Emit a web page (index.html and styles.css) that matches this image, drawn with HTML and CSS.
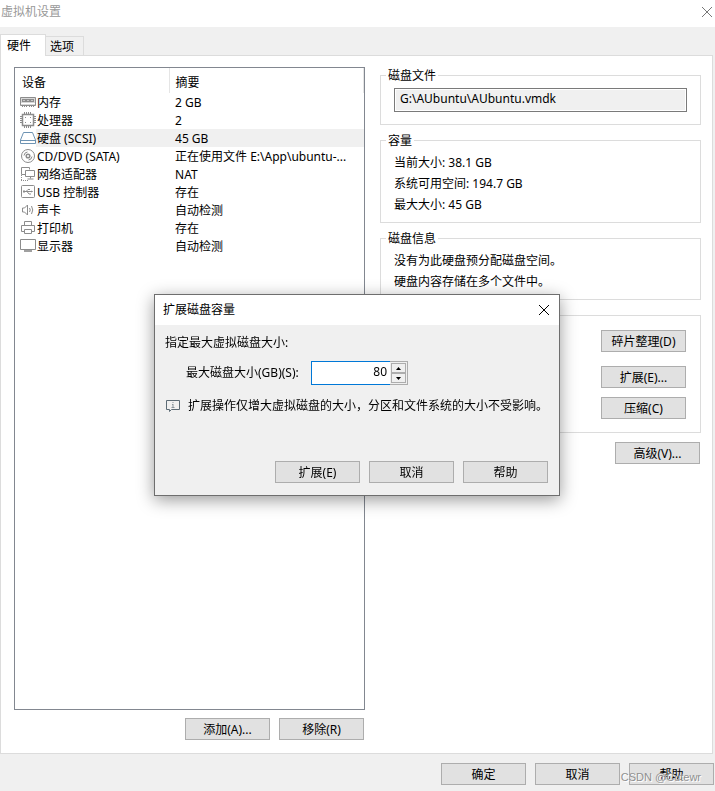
FILE: index.html
```html
<!DOCTYPE html>
<html lang="zh-CN">
<head>
<meta charset="utf-8">
<meta name="viewport" content="width=device-width, initial-scale=1">
<title>虚拟机设置</title>
<link rel="stylesheet" href="styles.css">
</head>
<body>
<header class="titlebar">
  <h1 class="title">虚拟机设置</h1>
  <button class="close" type="button" aria-label="关闭">
    <svg width="12" height="12" viewBox="0 0 12 12" fill="none" stroke="currentColor"><path d="M1 1l10 10M11 1L1 11"/></svg>
  </button>
</header>

<nav class="tabs" role="tablist">
  <button class="tab active" type="button" role="tab" aria-selected="true">硬件</button>
  <button class="tab" type="button" role="tab" aria-selected="false">选项</button>
</nav>

<main class="panel">
  <section class="left">
    <div class="list">
      <table class="devices">
        <colgroup><col class="c-icon"><col class="c-name"><col></colgroup>
        <thead>
          <tr><th colspan="2">设备</th><th>摘要</th></tr>
        </thead>
        <tbody>
          <tr>
            <td><svg class="icon" viewBox="0 0 16 16" fill="none" stroke="#8c8c8c"><path d="M.5 3.500h15v8H.5z" fill="#d8d8d8"/><path d="M2 6.500h12" stroke-width="3" stroke="#8c8c8c"/><path d="M3 6.500h2M7 6.500h2M11 6.500h2" stroke="#c8c8c8"/><path d="M1 9.500h14" stroke="#fff"/><path d="M2 12.500h5M9 12.500h5" stroke-dasharray="1 1"/></svg></td>
            <td>内存</td><td>2 GB</td>
          </tr>
          <tr>
            <td><svg class="icon" viewBox="0 0 16 16" fill="none" stroke="#8c8c8c"><path d="M2.500 2.500h11v11h-11z" stroke-width="1.500"/><path d="M4.500 0v2M6.500 0v2M8.500 0v2M10.500 0v2M4.500 14v2M6.500 14v2M8.500 14v2M10.500 14v2M0 4.500h2M0 6.500h2M0 8.500h2M0 10.500h2M14 4.500h2M14 6.500h2M14 8.500h2M14 10.500h2"/><path d="M5 5.500h1M10 10.500h1M5 10.500h1M10 5.500h1"/></svg></td>
            <td>处理器</td><td>2</td>
          </tr>
          <tr class="selected">
            <td><svg class="icon" viewBox="0 0 16 16" fill="none" stroke="#6d93b3"><path d="M3.500 2.500h9L15.500 10v3.500H.5V10z" fill="#fff"/><path d="M.5 10.500h15"/></svg></td>
            <td>硬盘 (SCSI)</td><td>45 GB</td>
          </tr>
          <tr>
            <td><svg class="icon" viewBox="0 0 16 16" fill="none" stroke="#8c8c8c"><circle cx="8" cy="8" r="6.500"/><circle cx="8" cy="8" r="1.800" stroke-width="1.500"/><path d="M4 7.500A4 4 0 0 1 7.500 4M12 8.500A4 4 0 0 1 8.500 12"/></svg></td>
            <td>CD/DVD (SATA)</td><td>正在使用文件 E:\App\ubuntu-...</td>
          </tr>
          <tr>
            <td><svg class="icon" viewBox="0 0 16 16" fill="none" stroke="#8c8c8c"><path d="M5.500 8.500h-4v-7h8v2"/><path d="M5.500 4.500h9v6h-9z"/><path d="M10.500 10.500v2M7.500 13h6"/><path d="M1.500 9v6M1 14.500h7" stroke-dasharray="1 1"/></svg></td>
            <td>网络适配器</td><td>NAT</td>
          </tr>
          <tr>
            <td><svg class="icon" viewBox="0 0 16 16" fill="none" stroke="#8c8c8c"><rect x="1.500" y="1.500" width="13" height="12" rx="1"/><path d="M3.500 7.500h9M6 7.500l2-2h2M7 7.500l2 2.500h2"/><path d="M3 6.500h2v2H3zM11 6.500l2 1-2 1z" fill="#8c8c8c" stroke="none"/></svg></td>
            <td>USB 控制器</td><td>存在</td>
          </tr>
          <tr>
            <td><svg class="icon" viewBox="0 0 16 16" fill="none" stroke="#8c8c8c"><path d="M2.500 6h2l3-3v10l-3-3h-2z"/><path d="M9.500 6q1.500 2 0 4M11.500 4q2.500 4 0 8"/></svg></td>
            <td>声卡</td><td>自动检测</td>
          </tr>
          <tr>
            <td><svg class="icon" viewBox="0 0 16 16" fill="none" stroke="#8c8c8c"><path d="M4.500 5.500v-4h7v4M4.500 11.500h-3v-6h13v6h-3"/><path d="M4.500 9.500h7v4h-7z"/></svg></td>
            <td>打印机</td><td>存在</td>
          </tr>
          <tr>
            <td><svg class="icon" viewBox="0 0 16 16" fill="none" stroke="#8c8c8c"><path d="M.5 1.500h15v10H.5z"/><path d="M4 13h8" stroke-width="2" stroke="#a0a0a0"/></svg></td>
            <td>显示器</td><td>自动检测</td>
          </tr>
        </tbody>
      </table>
    </div>
    <div class="actions">
      <button class="btn" type="button">添加(A)...</button>
      <button class="btn" type="button">移除(R)</button>
    </div>
  </section>

  <section class="right">
    <fieldset class="group">
      <legend>磁盘文件</legend>
      <input class="path" type="text" aria-label="磁盘文件" value="G:\AUbuntu\AUbuntu.vmdk" readonly>
    </fieldset>
    <fieldset class="group">
      <legend>容量</legend>
      <p class="line">当前大小: 38.1 GB</p>
      <p class="line">系统可用空间: 194.7 GB</p>
      <p class="line">最大大小: 45 GB</p>
    </fieldset>
    <fieldset class="group">
      <legend>磁盘信息</legend>
      <p class="line">没有为此硬盘预分配磁盘空间。</p>
      <p class="line">硬盘内容存储在多个文件中。</p>
    </fieldset>
    <div class="tools">
      <button class="btn defrag" type="button">碎片整理(D)</button>
      <button class="btn" type="button">扩展(E)...</button>
      <button class="btn" type="button">压缩(C)</button>
    </div>
    <div class="advanced">
      <button class="btn" type="button">高级(V)...</button>
    </div>
  </section>
</main>

<footer class="footer">
  <button class="btn" type="button">确定</button>
  <button class="btn" type="button">取消</button>
  <button class="btn" type="button">帮助</button>
  <span class="watermark">CSDN @Cutewr</span>
</footer>

<div class="dialog" role="dialog" aria-labelledby="dialog-title">
  <header class="dialog-head">
    <h2 class="dialog-title" id="dialog-title">扩展磁盘容量</h2>
    <button class="close dark" type="button" aria-label="关闭">
      <svg width="12" height="12" viewBox="0 0 12 12" fill="none" stroke="currentColor"><path d="M1 1l10 10M11 1L1 11"/></svg>
    </button>
  </header>
  <div class="dialog-body">
    <p class="prompt">指定最大虚拟磁盘大小:</p>
    <div class="size-row">
      <label for="size">最大磁盘大小(GB)(S):</label>
      <div class="spinner">
        <input id="size" type="text" inputmode="numeric" value="80">
        <div class="steps">
          <button type="button" aria-label="增加"><svg width="5" height="3" viewBox="0 0 5 3"><path d="M0 3L2.500 0 5 3z"/></svg></button>
          <button type="button" aria-label="减少"><svg width="5" height="3" viewBox="0 0 5 3"><path d="M0 0h5L2.500 3z"/></svg></button>
        </div>
      </div>
    </div>
    <div class="note">
      <svg width="14" height="13" viewBox="0 0 14 13" fill="none" stroke="#5c6b75"><path d="M.5.5h13v9h-8l-2 2v-2h-3z"/><path d="M7 2v1M7 4v4M6 4.500h1M5.500 7.500h3" stroke="#8a959c"/></svg>
      <p>扩展操作仅增大虚拟磁盘的大小，分区和文件系统的大小不受影响。</p>
    </div>
    <div class="dialog-actions">
      <button class="btn" type="button">扩展(E)</button>
      <button class="btn" type="button">取消</button>
      <button class="btn" type="button">帮助</button>
    </div>
  </div>
</div>
</body>
</html>
```

FILE: styles.css
```css
* {
  box-sizing: border-box;
}

body {
  margin: 0;
  min-height: 100vh;
  display: flex;
  flex-direction: column;
  background: #f0f0f0;
  color: #000;
  font: 12px/18px "Noto Sans", "Noto Sans CJK SC", sans-serif;
}

h1, h2, p {
  margin: 0;
  font-size: 12px;
  font-weight: 400;
}

button, input {
  font: inherit;
  color: inherit;
}

.titlebar {
  display: flex;
  justify-content: space-between;
  height: 27px;
  padding: 3px 2px 0 1px;
  background: #fff;
  color: #999;
}

.close {
  display: flex;
  align-items: center;
  height: 18px;
  padding: 0;
  border: 0;
  background: none;
  color: #777;
}

.close.dark {
  color: #000;
}

.tabs {
  display: flex;
  align-items: flex-end;
  height: 28px;
}

.tab {
  height: 19px;
  padding: 1px 9px 0 4px;
  border: 1px solid #dcdcdc;
  border-width: 1px 1px 0 0;
  background: #f0f0f0;
  line-height: 17px;
}

.tab.active {
  position: relative;
  height: 22px;
  margin-bottom: -1px;
  padding: 0 14px 0 6px;
  border-left-width: 1px;
  background: #fff;
}

.panel {
  flex: 1;
  display: flex;
  gap: 15px;
  margin-right: 2px;
  padding: 11px 11px 12px 13px;
  border: 1px solid #dcdcdc;
  background: #fff;
}

.left {
  flex: 351 1 0;
  display: flex;
  flex-direction: column;
}

.list {
  flex: 1;
  border: 1px solid #828790;
}

.devices {
  width: 100%;
  table-layout: fixed;
  border-collapse: collapse;
}

.c-icon {
  width: 21px;
}

.c-name {
  width: 133px;
}

.devices th {
  height: 25px;
  padding: 4px 6px 0 7px;
  border-right: 1px solid #e5e5e5;
  font-weight: 400;
  text-align: left;
}

.devices td {
  height: 18px;
  padding: 2px 6px 0 1px;
  line-height: 16px;
  white-space: nowrap;
}

.devices th:last-child,
.devices td:last-child {
  padding-left: 6px;
}

.devices td:first-child {
  padding: 0 0 0 5px;
}

.selected td:not(:first-child) {
  background: #f0f0f0;
}

.icon {
  display: block;
  width: 16px;
  height: 16px;
}

.btn {
  width: 85px;
  height: 22px;
  padding: 2px 0 0;
  border: 1px solid #adadad;
  background: #e1e1e1;
  line-height: 18px;
}

.actions {
  display: flex;
  justify-content: flex-end;
  gap: 9px;
  padding: 8px 1px 1px 0;
}

.right {
  flex: 321 1 0;
  display: flex;
  flex-direction: column;
}

.group {
  min-width: 0;
  margin: 0 0 7px;
  padding: 4px 13px 7px;
  border: 1px solid #dcdcdc;
}

.group legend {
  margin-left: -8px;
  padding: 2px 2px 0;
  line-height: 14px;
}

.path {
  display: block;
  width: 100%;
  height: 24px;
  margin: 1px 0 5px;
  padding: 0 5px 3px;
  border: 1px solid #7a7a7a;
  outline: 0;
  background: #f0f0f0;
  box-shadow: inset 0 0 0 1px #fff;
}

.line {
  line-height: 21px;
}

.tools {
  display: flex;
  flex-direction: column;
  align-items: flex-end;
  gap: 9px;
  margin: 8px 0 9px;
  padding: 14px 14px 13px;
  border: 1px solid #dcdcdc;
}

.defrag {
  margin-bottom: 5px;
}

.advanced {
  display: flex;
  justify-content: flex-end;
  padding-right: 1px;
}

.footer {
  position: relative;
  display: flex;
  justify-content: flex-end;
  gap: 9px;
  padding: 9px 1px 6px;
}

.watermark {
  position: absolute;
  right: 14px;
  bottom: 5px;
  color: #909090;
  text-shadow: 1px 1px 0 #fff;
  font-family: "Liberation Sans", sans-serif;
  font-size: 11px;
}

.dialog {
  position: fixed;
  inset: 0 1px 1px 0;
  width: 406px;
  max-width: 100%;
  height: fit-content;
  margin: auto;
  border: 1px solid #6e6e6e;
  background: #f0f0f0;
  box-shadow: 0 4px 16px rgba(0, 0, 0, 0.4);
}

.dialog-head {
  display: flex;
  align-items: center;
  justify-content: space-between;
  height: 30px;
  padding: 0 9px 0 8px;
  background: #fff;
}

.dialog-body {
  padding: 9px 11px 12px 10px;
}

.size-row {
  display: flex;
  align-items: center;
  padding: 9px 0 9px 21px;
}

.size-row label {
  width: 125px;
}

.spinner {
  display: flex;
  width: 97px;
  height: 24px;
}

.spinner input {
  flex: 1;
  min-width: 0;
  padding: 0 3px 3px;
  border: 1px solid #0078d7;
  border-right: 0;
  outline: 0;
  background: #fff;
  text-align: right;
}

.steps {
  display: flex;
  flex-direction: column;
  width: 18px;
  padding: 1px;
  border: 1px solid #adadad;
  border-left: 0;
}

.steps button {
  flex: 1;
  display: flex;
  align-items: center;
  justify-content: center;
  padding: 0;
  border: 1px solid #adadad;
  background: #f0f0f0;
}

.note {
  display: flex;
  align-items: center;
  gap: 8px;
  padding: 3px 0 0 1px;
}

.dialog-actions {
  display: flex;
  justify-content: flex-end;
  gap: 9px;
  padding-top: 46px;
}
```
